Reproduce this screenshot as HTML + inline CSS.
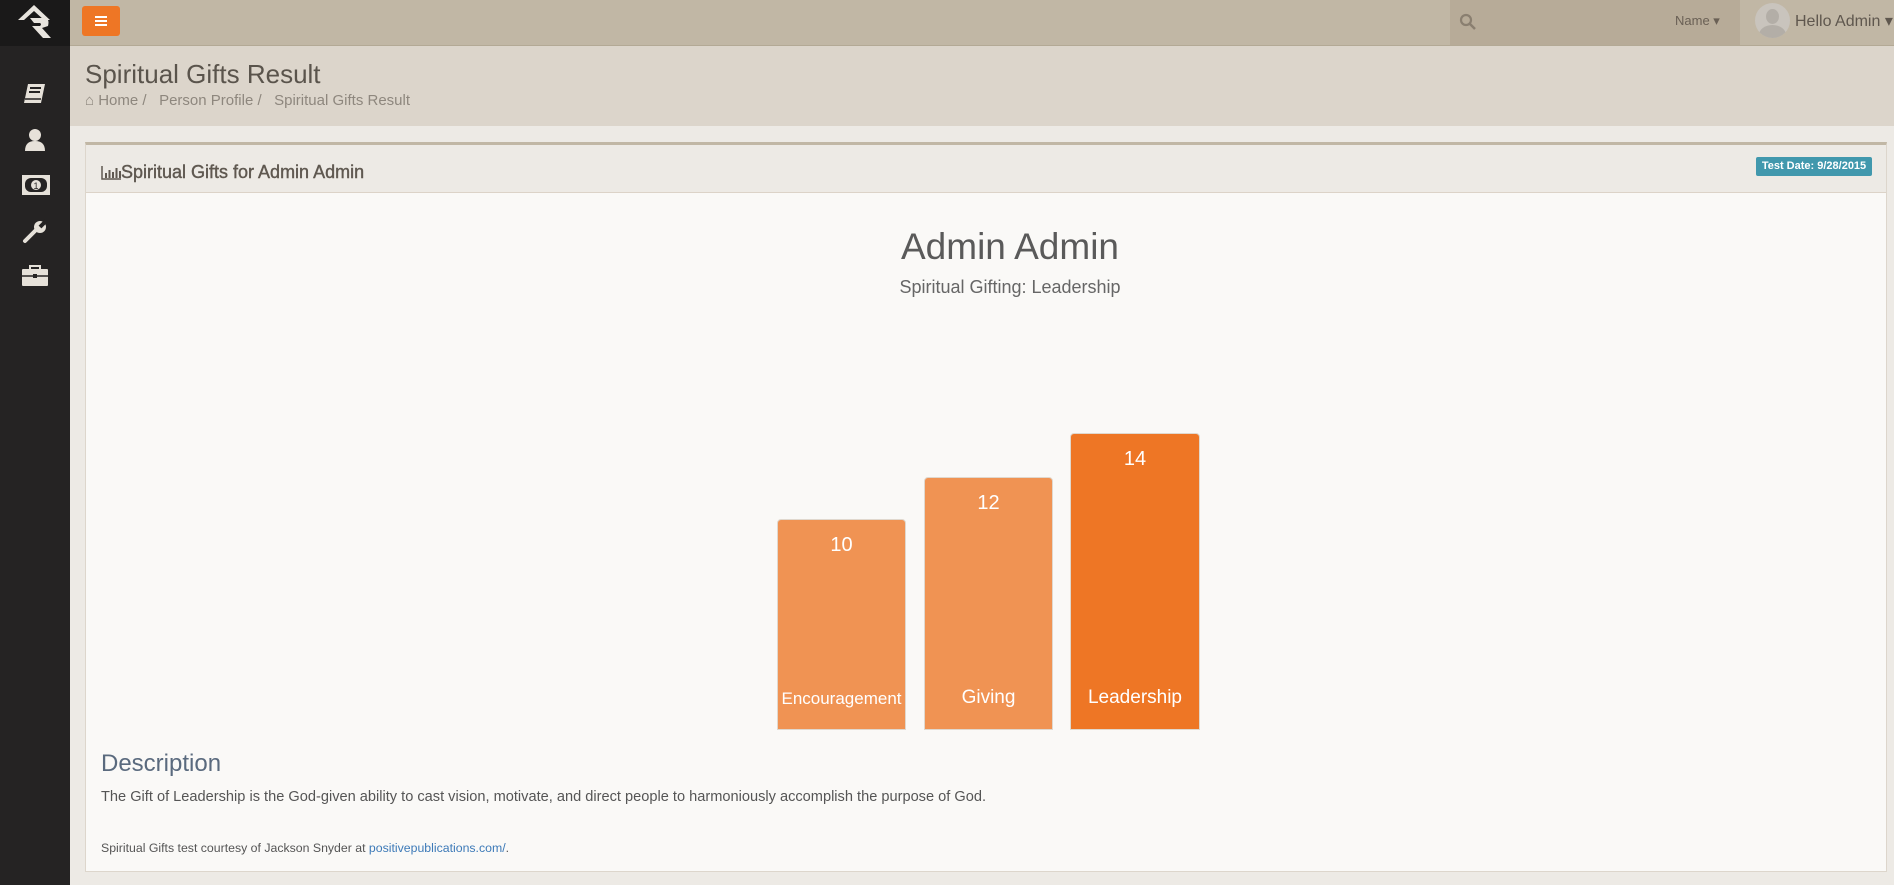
<!DOCTYPE html>
<html><head><meta charset="utf-8"><style>
*{box-sizing:border-box;margin:0;padding:0}
body{width:1894px;height:885px;overflow:hidden;background:#edeae5;font-family:"Liberation Sans",sans-serif;color:#555;position:relative}
.abs{position:absolute}
#side{left:0;top:0;width:70px;height:885px;background:#252323}
#logo{left:0;top:0;width:70px;height:46px;background:#1a1919}
#top{left:70px;top:0;width:1824px;height:46px;background:#c1b7a5;border-bottom:1px solid #b3a995}
#hdr{left:70px;top:46px;width:1824px;height:80px;background:#dcd5cb}
.ic{position:absolute;left:22px}
</style></head><body>
<div class="abs" id="side"></div>
<div class="abs" id="logo">
<svg width="70" height="46" viewBox="0 0 70 46"><path d="M18 20 L34 5 L50 20 L44 20 L34 11 L24 20 Z M30 18 L44 18 Q50 18 48 26 L42 28 L51 38 L43 38 L32 26 L40 26 Q42 24 40 23 L34 23 Z" fill="#e8e4de"/></svg>
</div>
<svg class="ic" style="top:82px" width="26" height="24" viewBox="0 0 26 24"><path d="M6 2h17l-4 19H2z" fill="#e6e1d9"/><path d="M8 6h11M7 10h11" stroke="#252323" stroke-width="2"/><path d="M3 17h16" stroke="#252323" stroke-width="1.5"/></svg>
<svg class="ic" style="top:128px" width="26" height="24" viewBox="0 0 26 24"><circle cx="13" cy="7" r="6" fill="#e6e1d9"/><path d="M3 23 Q3 13 13 13 Q23 13 23 23Z" fill="#e6e1d9"/></svg>
<svg class="ic" style="top:175px" width="28" height="20" viewBox="0 0 28 20"><rect x="0" y="0" width="28" height="20" fill="#e6e1d9"/><rect x="3" y="3" width="22" height="14" rx="6" fill="#252323"/><circle cx="14" cy="10" r="5" fill="#e6e1d9"/><text x="14" y="14" font-size="9" text-anchor="middle" fill="#252323">1</text></svg>
<svg class="ic" style="top:219px" width="26" height="26" viewBox="0 0 26 26"><path d="M3 22 L14 11" stroke="#e6e1d9" stroke-width="4" stroke-linecap="round"/><circle cx="18" cy="8" r="6" fill="#e6e1d9"/><path d="M18 8 L24 2" stroke="#252323" stroke-width="4"/></svg>
<svg class="ic" style="top:264px" width="26" height="22" viewBox="0 0 26 22"><rect x="0" y="5" width="26" height="17" rx="1" fill="#e6e1d9"/><path d="M8 5V2h10v3" stroke="#e6e1d9" stroke-width="2" fill="none"/><path d="M0 12h26" stroke="#252323" stroke-width="1.5"/><rect x="11" y="10" width="4" height="4" fill="#252323"/></svg>
<div class="abs" id="top"></div>
<div class="abs" style="left:82px;top:6px;width:38px;height:30px;background:#ee7625;border-radius:3px"><div style="position:absolute;left:13px;top:10px;width:12px;height:2px;background:#fff;box-shadow:0 4px #fff,0 8px #fff"></div></div>
<div class="abs" style="left:1450px;top:0;width:290px;height:45px;background:#b7ab98"></div>
<svg class="abs" style="left:1459px;top:13px" width="18" height="18" viewBox="0 0 18 18"><circle cx="7" cy="7" r="5" stroke="#8a7f70" stroke-width="2.2" fill="none"/><path d="M11 11l5 5" stroke="#8a7f70" stroke-width="2.5"/></svg>
<div class="abs" style="left:1675px;top:13px;font-size:13px;color:#6a6055">Name ▾</div>
<div class="abs" style="left:1755px;top:3px;width:35px;height:35px;border-radius:50%;background:#c9c4bd;overflow:hidden"><div style="position:absolute;left:11px;top:6px;width:13px;height:15px;border-radius:50%;background:#b3aea7"></div><div style="position:absolute;left:4px;top:22px;width:27px;height:20px;border-radius:50%;background:#b3aea7"></div></div>
<div class="abs" style="left:1795px;top:11px;font-size:16px;color:#5f574e">Hello Admin ▾</div>
<div class="abs" id="hdr"></div>
<div class="abs" style="left:85px;top:59px;font-size:26px;color:#5a544c">Spiritual Gifts Result</div>
<div class="abs" style="left:85px;top:92px;font-size:15px;color:#8e877e">⌂ Home / &nbsp; Person Profile / &nbsp; Spiritual Gifts Result</div>
<div class="abs" style="left:85px;top:142px;width:1802px;height:730px;background:#faf9f7;border:1px solid #ddd6cc;border-top:3px solid #c1b7a5"></div>
<div class="abs" style="left:86px;top:145px;width:1800px;height:48px;background:#edeae5;border-bottom:1px solid #dcd3c8"></div>
<svg class="abs" style="left:101px;top:166px" width="20" height="14" viewBox="0 0 20 14"><path d="M1 0v13h19" stroke="#5f5850" stroke-width="1.5" fill="none"/><path d="M5 7v5M8.5 4v8M12 6v6M15.5 2v10M19 5v7" stroke="#5f5850" stroke-width="2"/></svg>
<div class="abs" style="left:121px;top:162px;font-size:18px;color:#5f5850;-webkit-text-stroke:0.4px #5f5850">Spiritual Gifts for Admin Admin</div>
<div class="abs" style="left:1756px;top:157px;width:116px;height:19px;background:#4198ad;border-radius:2px;color:#fff;font-size:11px;font-weight:bold;text-align:center;line-height:19px">Test Date: 9/28/2015</div>
<div class="abs" style="left:700px;top:226px;width:620px;text-align:center;font-size:37px;color:#5a5a5a">Admin Admin</div>
<div class="abs" style="left:700px;top:277px;width:620px;text-align:center;font-size:18px;color:#666">Spiritual Gifting: Leadership</div>
<div class="abs" style="left:777px;top:519px;width:129px;height:211px;background:#f09353;border:1px solid #e0d8ce;border-radius:4px 4px 0 0;color:#fff;text-align:center">
<div style="margin-top:14px;font-size:20px">10</div><div style="position:absolute;bottom:20px;width:100%;font-size:17px">Encouragement</div></div>
<div class="abs" style="left:924px;top:477px;width:129px;height:253px;background:#f09353;border:1px solid #e0d8ce;border-radius:4px 4px 0 0;color:#fff;text-align:center">
<div style="margin-top:14px;font-size:20px">12</div><div style="position:absolute;bottom:20px;width:100%;font-size:19px">Giving</div></div>
<div class="abs" style="left:1070px;top:433px;width:130px;height:297px;background:#ee7625;border:1px solid #e0d8ce;border-radius:4px 4px 0 0;color:#fff;text-align:center">
<div style="margin-top:14px;font-size:20px">14</div><div style="position:absolute;bottom:20px;width:100%;font-size:19px">Leadership</div></div>
<div class="abs" style="left:101px;top:750px;font-size:24px;color:#5a6a7e">Description</div>
<div class="abs" style="left:101px;top:789px;font-size:14.6px;color:#555">The Gift of Leadership is the God-given ability to cast vision, motivate, and direct people to harmoniously accomplish the purpose of God.</div>
<div class="abs" style="left:101px;top:841px;font-size:12.3px;color:#555">Spiritual Gifts test courtesy of Jackson Snyder at <span style="color:#3d7ab8">positivepublications.com/</span>.</div>
</body></html>
